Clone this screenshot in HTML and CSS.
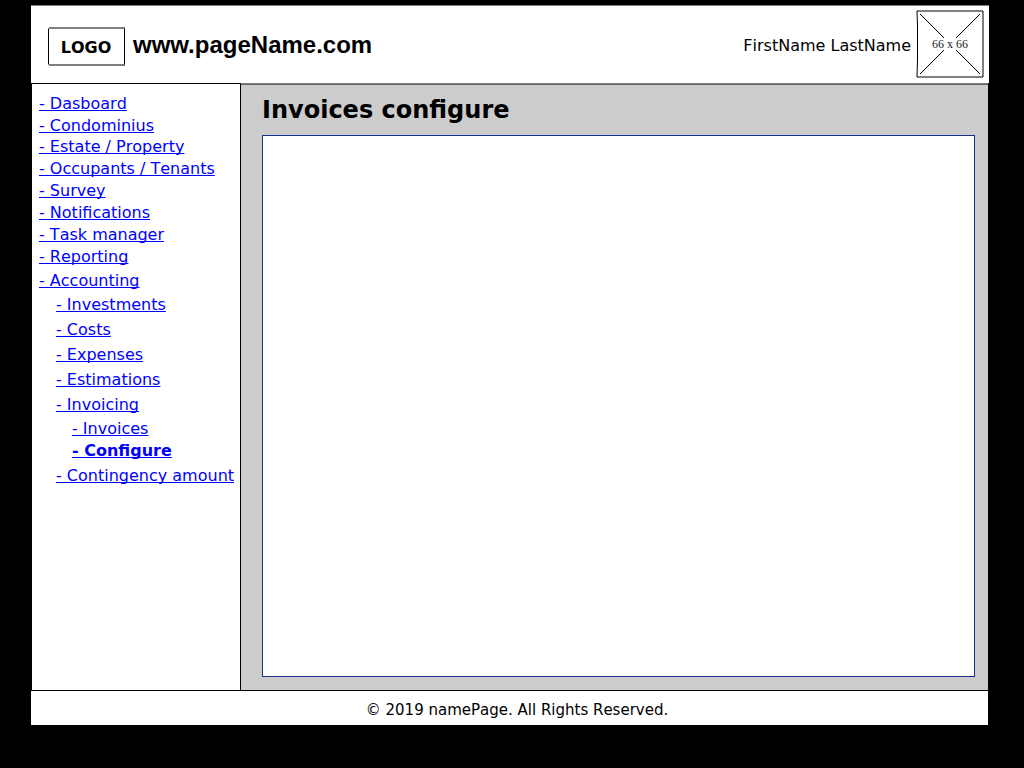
FILE: index.html
```html
<!DOCTYPE html>
<html lang="en">
<head>
<meta charset="utf-8">
<title>Invoices configure</title>
<link rel="stylesheet" href="styles.css">
</head>
<body>
<div class="page">
  <header class="header">
    <div class="logo">
      <svg class="logo-frame" width="78" height="39" viewBox="0 0 78 39" fill="none">
        <path d="M1 1H77M1 38H77" stroke="#000"/>
        <path d="M.5 1.500V37.500M76.500 1.500V37.500" stroke="#000"/>
      </svg>
      <span class="logo-text">LOGO</span>
    </div>
    <div class="site">www.pageName.com</div>
    <div class="user">FirstName LastName</div>
    <svg class="avatar" width="68" height="68" viewBox="0 0 68 68">
      <path d="M1 1H67V67H1L1.500 50V17Z" fill="none" stroke="#000"/>
      <path d="M4 4L64 64M64 4L4 64" stroke="#000"/>
      <rect x="14" y="28" width="40" height="12" fill="#fff"/>
      <text x="34" y="38" text-anchor="middle" class="avatar-label">66 x 66</text>
    </svg>
  </header>
  <div class="body">
    <nav class="sidebar">
      <ul class="menu">
        <li><a href="#">- Dasboard</a></li>
        <li><a href="#">- Condominius</a></li>
        <li class="tight"><a href="#">- Estate / Property</a></li>
        <li><a href="#">- Occupants / Tenants</a></li>
        <li><a href="#">- Survey</a></li>
        <li><a href="#">- Notifications</a></li>
        <li><a href="#">- Task manager</a></li>
        <li><a href="#">- Reporting</a></li>
        <li class="parent"><a href="#">- Accounting</a>
          <ul class="submenu">
            <li><a href="#">- Investments</a></li>
            <li><a href="#">- Costs</a></li>
            <li><a href="#">- Expenses</a></li>
            <li><a href="#">- Estimations</a></li>
            <li><a href="#">- Invoicing</a>
              <ul class="leaf">
                <li><a href="#">- Invoices</a></li>
                <li><a class="active" href="#">- Configure</a></li>
              </ul>
            </li>
            <li><a href="#">- Contingency amount</a></li>
          </ul>
        </li>
      </ul>
    </nav>
    <main class="main">
      <h1 class="title">Invoices configure</h1>
      <section class="panel"></section>
    </main>
  </div>
  <footer class="footer">© 2019 namePage. All Rights Reserved.</footer>
</div>
</body>
</html>
```
FILE: styles.css
```css
* { box-sizing: border-box; }
body {
  margin: 0;
  background: #000;
  color: #000;
  font: 16px/22px "DejaVu Sans", sans-serif;
  font-kerning: none;
}
.page {
  width: 958px;
  height: 768px;
  margin-left: 31px;
  padding-top: 5px;
}
.header {
  display: flex;
  align-items: flex-start;
  height: 78px;
  border-top: 1px solid #808080;
  background: #fff;
  padding: 0 5px 0 17px;
}
.logo {
  display: grid;
  width: 78px;
  height: 39px;
  margin-top: 21px;
}
.logo-frame, .logo-text { grid-area: 1 / 1; }
.logo-text {
  padding-right: 2px;
  text-align: center;
  font-weight: bold;
  line-height: 41px;
}
.site {
  margin: 25px auto 0 7px;
  font: bold 24px/28px "Liberation Sans", sans-serif;
  font-kerning: auto;
}
.user { margin: 29px 5px 0 0; }
.avatar { margin-top: 4px; }
.avatar-label { font: 12px "Liberation Serif", serif; fill: #222; }
.body {
  display: flex;
  height: 607px;
  width: 957px;
}
.sidebar {
  width: 210px;
  border: 1px solid #000;
  border-bottom: 0;
  background: #fff;
  padding: 9px 0 0 7px;
}
.menu, .submenu, .leaf {
  list-style: none;
  margin: 0;
  padding: 0;
}
.menu a {
  display: block;
  color: #00f;
  white-space: nowrap;
  text-decoration-skip-ink: none;
}
.tight { margin-top: -1px; }
.parent { margin-top: 2px; }
.submenu { padding: 2px 0 0 17px; }
.submenu > li + li { margin-top: 3px; }
.leaf { padding: 2px 0 0 16px; }
.menu .active { font-weight: bold; }
.main {
  display: flex;
  flex-direction: column;
  flex: 1;
  background: #ccc;
  border-top: 1px solid #808080;
  box-shadow: inset 0 1px #666;
  padding: 12px 13px 13px 21px;
}
.title {
  margin: 0 0 11px;
  font-size: 24px;
  line-height: 28px;
}
.panel {
  flex: 1;
  border: 1px solid #15308a;
  background: #fff;
}
.footer {
  width: 957px;
  height: 35px;
  border-top: 1px solid #000;
  background: #fff;
  text-align: center;
  font-size: 15px;
  line-height: 38px;
  padding-left: 15px;
  overflow: hidden;
}
```
